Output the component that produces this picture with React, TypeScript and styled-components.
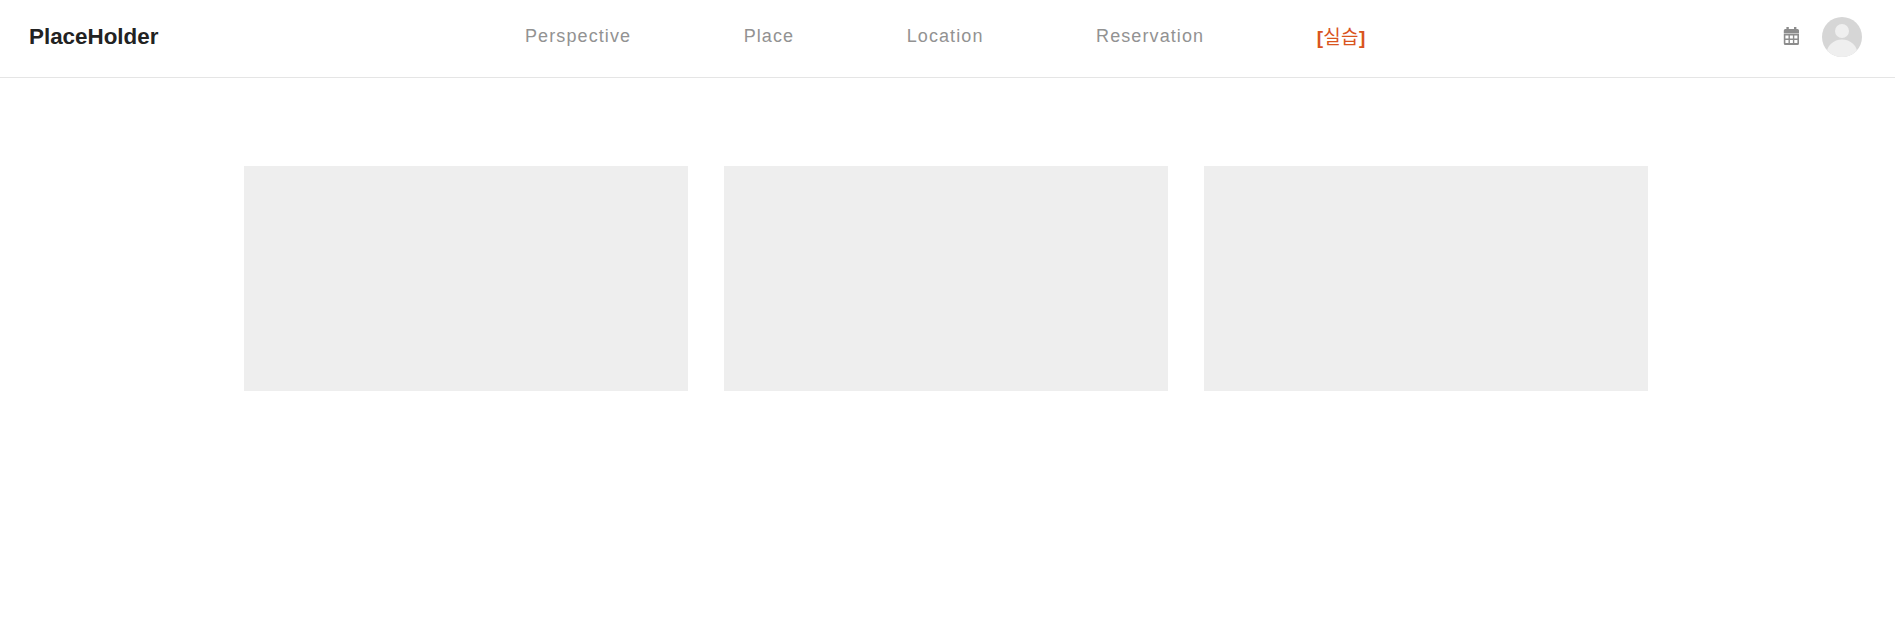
import React from "react";
import styled, { createGlobalStyle } from "styled-components";

const Global = createGlobalStyle`
  html, body { margin: 0; padding: 0; background: #fff; }
  body { font-family: "Liberation Sans", Arial, "Noto Sans CJK KR", sans-serif; }
`;

const Header = styled.header`
  display: grid;
  grid-template-columns: 496px 1fr auto;
  align-items: center;
  box-sizing: border-box;
  height: 78px;
  padding: 0 33px 3px 29px;
  border-bottom: 1px solid #e5e5e5;
`;

const Logo = styled.div`
  font-size: 22.4px;
  font-weight: 700;
  color: #222;
`;

const Nav = styled.nav`
  display: flex;
  align-items: center;
  gap: 112.5px;
  padding-bottom: 2px;
`;

const NavLink = styled.a`
  font-size: 18px;
  letter-spacing: 1.1px;
  color: #929292;
`;

const AccentLink = styled.a`
  font-size: 19px;
  font-weight: 700;
  letter-spacing: 0.3px;
  color: #d9541e;
  margin-bottom: 2px;
`;

const Hangul = styled.span`
  font-weight: 400;
`;

const Actions = styled.div`
  display: flex;
  align-items: center;
  gap: 23px;
`;

const IconWrap = styled.span`
  display: flex;
  width: 16px;
  height: 18px;
  margin-bottom: 2px;
`;

const Avatar = styled.span`
  display: block;
  width: 40px;
  height: 40px;
`;

const Main = styled.main`
  display: flex;
  gap: 36px;
  padding: 88px 0 0 244px;
`;

const Card = styled.div`
  width: 444px;
  height: 225px;
  background: #eee;
`;

const CalendarIcon = () => (
  <svg viewBox="0 0 16 18" width="16" height="18" fill="#8c8c8c">
    <rect x="3.4" y="0" width="2.4" height="4" />
    <rect x="11" y="0" width="2.4" height="4" />
    <path d="M0.8 3.5a1.5 1.5 0 0 1 1.5-1.5h12.2a1.5 1.5 0 0 1 1.5 1.5v2.5H0.8z" />
    <path
      fillRule="evenodd"
      d="M0.8 6.5H16V16.5a1.5 1.5 0 0 1-1.5 1.5H2.3a1.5 1.5 0 0 1-1.5-1.5zM2.4 8.5v3h3.1v-3zM6.9 8.5v3h3v-3zM11.3 8.5v3h3.1v-3zM2.4 13v3h3.1v-3zM6.9 13v3h3v-3zM11.3 13v3h3.1v-3z"
    />
  </svg>
);

const AvatarArt = () => (
  <svg viewBox="0 0 40 40" width="40" height="40">
    <defs>
      <clipPath id="avatar-clip">
        <circle cx="20" cy="20" r="20" />
      </clipPath>
    </defs>
    <circle cx="20" cy="20" r="20" fill="#d6d6d6" />
    <g clipPath="url(#avatar-clip)" fill="#efefef">
      <circle cx="20" cy="14" r="7" />
      <ellipse cx="20" cy="37" rx="15.5" ry="14.5" />
    </g>
  </svg>
);

export default function App() {
  return (
    <>
      <Global />
      <Header>
        <Logo>PlaceHolder</Logo>
        <Nav>
          <NavLink>Perspective</NavLink>
          <NavLink>Place</NavLink>
          <NavLink>Location</NavLink>
          <NavLink>Reservation</NavLink>
          <AccentLink>
            [<Hangul>실습</Hangul>]
          </AccentLink>
        </Nav>
        <Actions>
          <IconWrap>
            <CalendarIcon />
          </IconWrap>
          <Avatar>
            <AvatarArt />
          </Avatar>
        </Actions>
      </Header>
      <Main>
        <Card />
        <Card />
        <Card />
      </Main>
    </>
  );
}
